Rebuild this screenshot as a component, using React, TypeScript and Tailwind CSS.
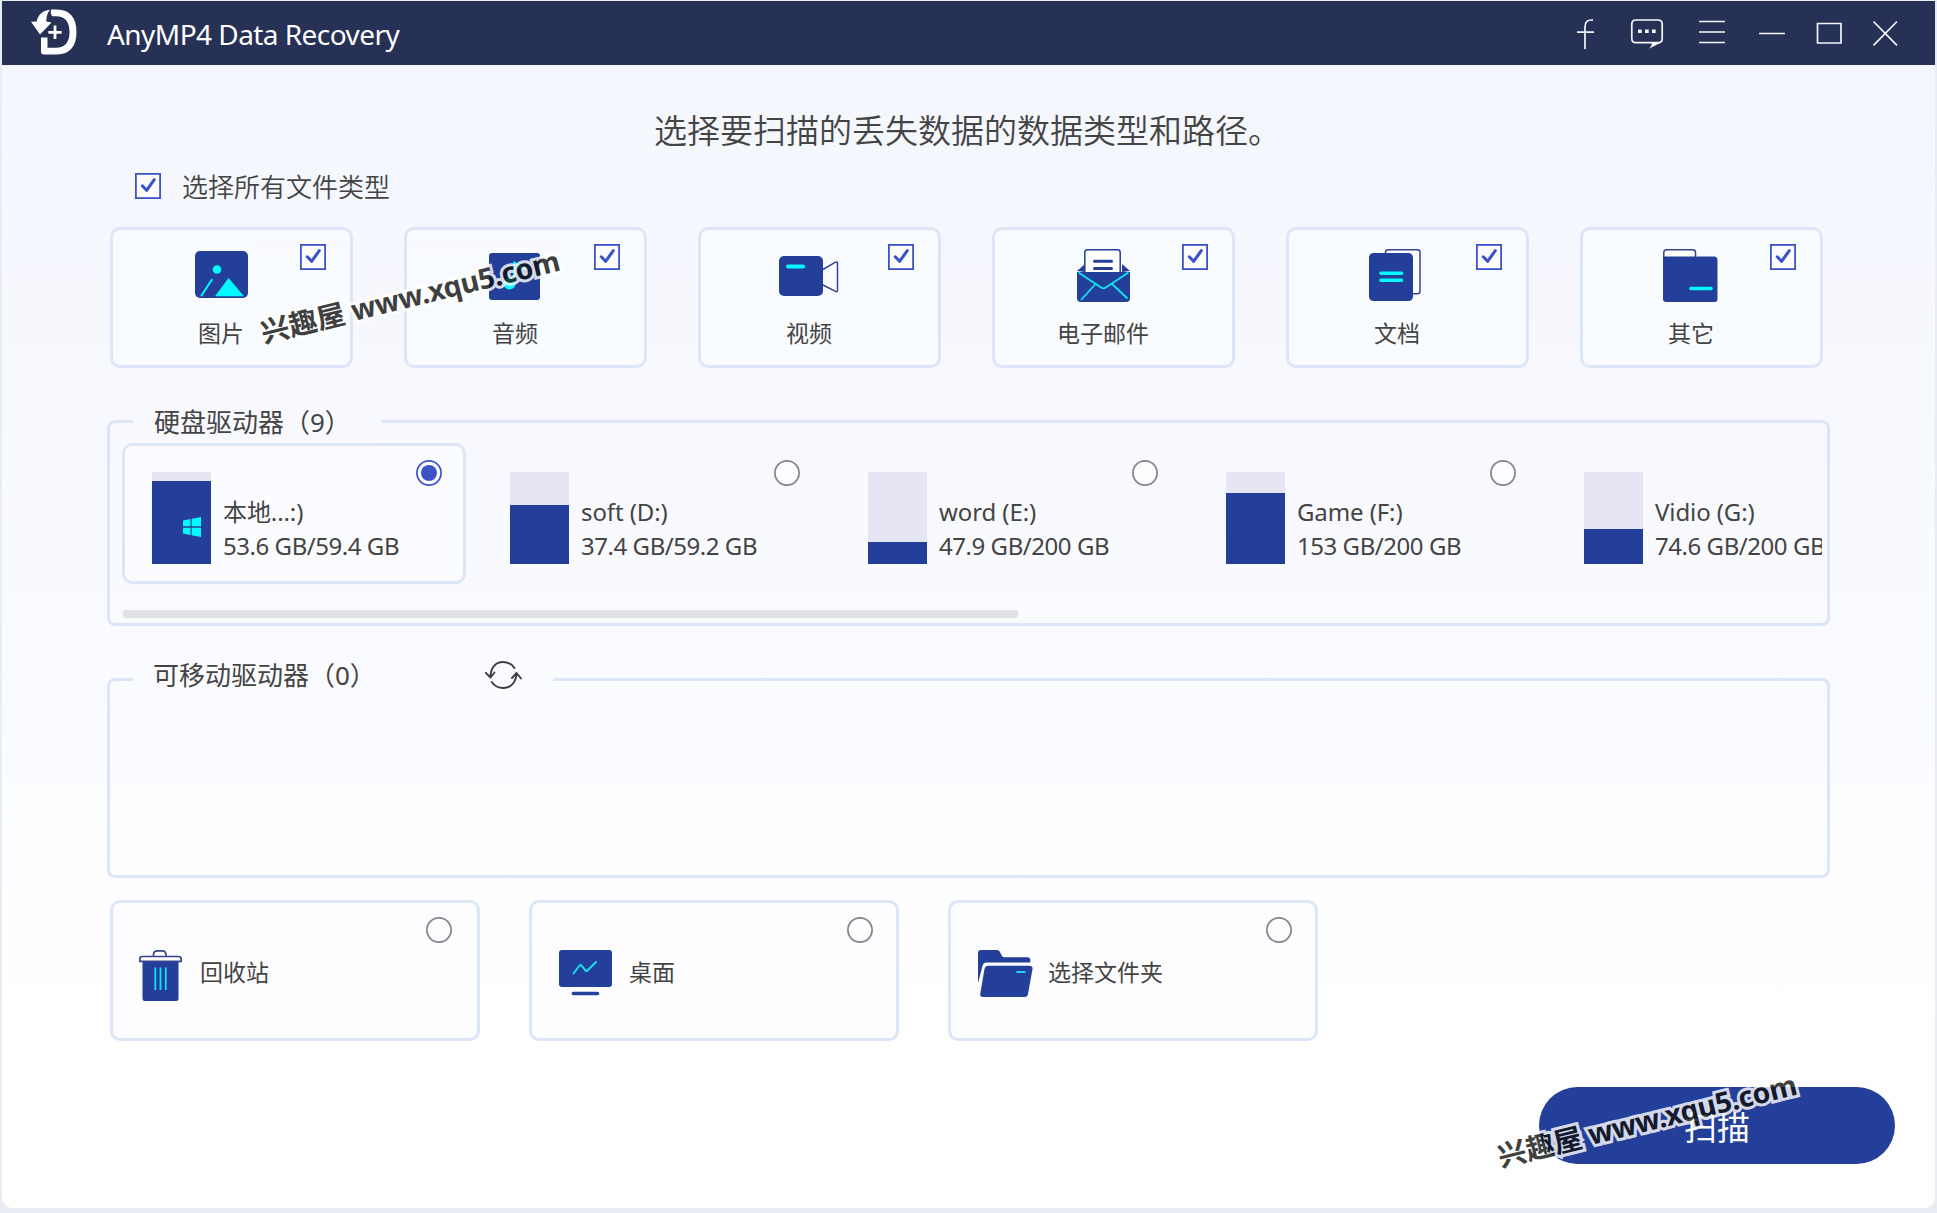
import React from 'react';

const NAVY = '#233f99';
const CYAN = '#00fbff';

function Check({ className = '' }: { className?: string }) {
  return (
    <svg viewBox="0 0 26 26" className={`h-[26px] w-[26px] shrink-0 ${className}`} fill="none" stroke="#3c53c7">
      <rect x="0.9" y="0.9" width="24.2" height="24.2" strokeWidth="1.8" fill="#fdfdff" />
      <path d="M7.3 12.800 11.6 17.300 19.300 6.700" strokeWidth="3.100" strokeLinecap="round" strokeLinejoin="round" />
    </svg>
  );
}

function Radio({ checked = false }: { checked?: boolean }) {
  return (
    <svg viewBox="0 0 26 26" className="h-[26px] w-[26px] shrink-0" fill="none">
      <circle cx="13" cy="13" r="12.1" stroke={checked ? '#3c53c7' : '#808389'} strokeWidth="1.700" fill="#fdfdff" />
      {checked && <circle cx="13" cy="13" r="8" fill="#3c53c7" />}
    </svg>
  );
}

function PictureIcon() {
  return (
    <svg viewBox="0 0 53 47" width="53" height="47">
      <rect width="53" height="47" rx="5" fill={NAVY} />
      <circle cx="22" cy="18.500" r="4.300" fill={CYAN} />
      <path d="M6.500 44.500 16.800 28.800" stroke={CYAN} strokeWidth="2" strokeLinecap="round" />
      <path d="M20 45.300 33.500 27 49 45.300Z" fill={CYAN} />
    </svg>
  );
}

function MusicIcon() {
  return (
    <svg viewBox="0 0 51 47" width="51" height="47">
      <rect width="51" height="47" rx="3" fill={NAVY} />
      <circle cx="20.500" cy="30.500" r="6" fill={CYAN} />
      <path d="M25.500 31V10c3 1 4 5 11 6" stroke={CYAN} strokeWidth="2.500" fill="none" />
    </svg>
  );
}

function VideoIcon() {
  return (
    <svg viewBox="0 0 60 40" width="60" height="40">
      <path d="M43 14 56.500 6.200Q58.500 5.400 58.500 7.500V34Q58.500 36.500 56.500 35.400L43 28.500" fill="#fafbff" stroke="#36458b" strokeWidth="1.500" />
      <rect width="44" height="40" rx="5" fill={NAVY} />
      <path d="M9 10.500h15" stroke={CYAN} strokeWidth="4" strokeLinecap="round" />
    </svg>
  );
}

function MailIcon() {
  return (
    <svg viewBox="0 0 53 53" width="53" height="53">
      <path d="M0 22 8 15V23ZM53 22 45 15V23Z" fill={NAVY} />
      <path d="M7.800 26V3.500Q7.800.8 10.500.8H40.500Q43.200.8 43.200 3.500V26" fill="#fff" stroke={NAVY} strokeWidth="1.500" />
      <path d="M17.500 12.300h17M17.500 19.500h17" stroke={NAVY} strokeWidth="3" strokeLinecap="round" />
      <path d="M0 23H53V49Q53 53 49 53H4Q0 53 0 49Z" fill={NAVY} />
      <path d="M1.500 23.500 24.500 38.700Q26.500 40 28.500 38.700L51.500 23.500M4 51 18.500 35M50.500 49.500 34.500 34.500" fill="none" stroke="#12e4f2" strokeWidth="1.800" />
    </svg>
  );
}

function DocumentIcon() {
  return (
    <svg viewBox="0 0 52 52" width="52" height="52">
      <rect x="16.500" y="0.800" width="34.500" height="44" rx="2.500" fill="#fdfdff" stroke="#36458b" strokeWidth="1.500" />
      <rect y="4" width="44" height="48" rx="4.500" fill={NAVY} />
      <path d="M12 24.300H32.500M12 31.300H32.500" stroke={CYAN} strokeWidth="3.600" strokeLinecap="round" />
    </svg>
  );
}

function OtherIcon() {
  return (
    <svg viewBox="0 0 55 53" width="55" height="53">
      <path d="M.8 12V3.500Q.8.800 3.500.8H29.500Q32.500.8 32.500 3.500V12" fill="#fff" stroke="#36458b" strokeWidth="1.500" />
      <path d="M0 7.500H51Q54.500 7.500 54.500 11V50Q54.500 53 51.500 53H3Q0 53 0 50Z" fill={NAVY} />
      <path d="M28 39.500H48" stroke={CYAN} strokeWidth="3.600" strokeLinecap="round" />
    </svg>
  );
}

function TrashIcon() {
  return (
    <svg viewBox="0 0 43 51" width="43" height="51">
      <path d="M14.500 7V5Q14.500.8 18.500.8H23Q27 .8 27 5V7" fill="#fff" stroke="#36458b" strokeWidth="1.700" />
      <path d="M3.500 10H39.500V48.500Q39.500 51 37 51H6Q3.500 51 3.500 48.500Z" fill={NAVY} />
      <path d="M.8 11.300V9Q.8 6.500 3.300 6.500H39.500Q42.200 6.500 42.200 9V11.300Z" fill="#fff" stroke="#36458b" strokeWidth="1.700" />
      <path d="M16.300 17.500V40M21.500 17.500V40M26.800 17.500V40" stroke="#0ee5f2" strokeWidth="1.800" />
    </svg>
  );
}

function DesktopIcon() {
  return (
    <svg viewBox="0 0 53 46" width="53" height="46">
      <rect width="53" height="37" rx="3" fill={NAVY} />
      <path d="M14.500 23.500 20.500 15.500Q21.500 14.500 22.500 15.500L26.500 20.500Q27.500 21.500 28.500 20.500L37 12" fill="none" stroke="#12e4f2" strokeWidth="1.900" strokeLinecap="round" />
      <path d="M14.300 43.500H38.500" stroke={NAVY} strokeWidth="3.500" strokeLinecap="round" />
    </svg>
  );
}

function FolderIcon() {
  return (
    <svg viewBox="0 0 55 47" width="55" height="47">
      <path d="M0 33V3Q0 0 3 0H19Q21.500 0 22.200 2.500L24 6Q24.800 7.300 26.500 7.300H49.500Q52.300 7.300 52.300 10V12.500H8Q5.500 12.500 4.700 15Z" fill={NAVY} />
      <path d="M10.500 15.700H51.500Q55 15.700 54.500 19L50 44Q49.500 47 46.500 47H4.500Q1.700 47 2.200 44L6.500 19Q7.200 15.700 10.500 15.700Z" fill={NAVY} />
      <path d="M38.500 22H47.500" stroke="#20dced" strokeWidth="1.900" />
    </svg>
  );
}

const types = [
  { label: '图片', icon: <PictureIcon />, pad: 'pt-[21px]' },
  { label: '音频', icon: <MusicIcon />, pad: 'pt-[23px] pr-[2px]' },
  { label: '视频', icon: <VideoIcon />, pad: 'pt-[26px]' },
  { label: '电子邮件', icon: <MailIcon />, pad: 'pt-[19px]' },
  { label: '文档', icon: <DocumentIcon />, pad: 'pt-[19px] pr-[4px]' },
  { label: '其它', icon: <OtherIcon />, pad: 'pt-[19px] pr-[2px]' },
];

const drives = [
  { name: '本地...:)', size: '53.6 GB/59.4 GB', fill: 83, selected: true },
  { name: 'soft (D:)', size: '37.4 GB/59.2 GB', fill: 59 },
  { name: 'word (E:)', size: '47.9 GB/200 GB', fill: 22 },
  { name: 'Game (F:)', size: '153 GB/200 GB', fill: 71 },
  { name: 'Vidio (G:)', size: '74.6 GB/200 GB', fill: 35 },
];

const places = [
  { label: '回收站', icon: <TrashIcon />, pad: 'pl-[26px]', gap: 'gap-[18px]', right: 'right-[25px]' },
  { label: '桌面', icon: <DesktopIcon />, pad: 'pl-[27px]', gap: 'gap-[17px]', right: 'right-[23px]' },
  { label: '选择文件夹', icon: <FolderIcon />, pad: 'pl-[27px]', gap: 'gap-[15px]', right: 'right-[23px]' },
];

function Logo() {
  return (
    <svg viewBox="0 0 46 46" width="46" height="46" fill="#fff">
      <path d="M20 .5H26C39 .5 45.500 9 45.500 23S39 45.500 26 45.500H13Q10 45.500 10 42.500V28.500H16.500V38.800H25C34 38.800 38.500 33.500 38.500 23S34 7.200 25 7.200H21Q19 4 20 .5Z" />
      <path d="M18.800.8C11.500 1.500 7 6 5.800 12.500L0 12.800 9 25.500 20.500 13.500 15.300 12.500C15.300 8 16.300 4.500 18.800.8Z" />
      <path d="M24 16.500V30M17.300 23.300H30.700" stroke="#fff" strokeWidth="2.800" />
    </svg>
  );
}

function TitleBar() {
  return (
    <header className="flex h-16 shrink-0 items-start bg-[#273156] text-white">
      <div className="ml-[29px] mt-[8px] w-[76px]"><Logo /></div>
      <h1 className="mt-[13px] text-[28px] leading-[40px] tracking-[-0.55px]">AnyMP4 Data Recovery</h1>
      <svg viewBox="1570 1 350 64" width="350" height="64" className="ml-auto mr-[15px]" fill="none" stroke="#f4f6fb" strokeWidth="1.700">
        <path d="M1593 20.200C1587.500 19.200 1585 22 1585 27V49M1577 32.200H1594" />
        <path d="M1636 20H1658Q1662.200 20 1662.200 24.200V38.500Q1662.200 42.700 1658 42.700H1636Q1631.800 42.700 1631.800 38.500V24.200Q1631.800 20 1636 20Z" />
        <path d="M1652 43H1660L1649 48.800Q1652 46 1652 43Z" fill="#fff" stroke="none" />
        <path d="M1638 31.300H1656" strokeWidth="3.500" strokeDasharray="3.700 3.300" />
        <path d="M1699 21.500H1725M1699 32H1725M1699 42.500H1725M1759 33.500H1785" />
        <path d="M1817.500 23.500H1841V43H1817.500Z" />
        <path d="M1873.500 21.500 1897 45.300M1897 21.500 1873.500 45.300" />
      </svg>
    </header>
  );
}

function WindowsMark() {
  return (
    <svg viewBox="0 0 18 20" width="18" height="20" fill={CYAN} className="mb-[27px] mr-[10px]">
      <path d="M0 3.500 7.500 2V9.200H0ZM8.700 1.800 18 0V9.200H8.700ZM0 10.700H7.500V18L0 16.500ZM8.700 10.700H18V20L8.700 18.200Z" />
    </svg>
  );
}

function Watermark({ className }: { className: string }) {
  return (
    <div className={`pointer-events-none absolute origin-bottom-left -rotate-[13.8deg] whitespace-nowrap text-[28.5px] leading-[40px] font-bold text-[#111] opacity-80 [-webkit-text-stroke:6px_white] [paint-order:stroke_fill] ${className}`}>
      兴趣屋 <span className="tracking-[-0.3px]">www.xqu5.com</span>
    </div>
  );
}

export default function App() {
  return (
    <div className="h-[1213px] w-[1937px] overflow-hidden bg-[#e9edf3] px-[2px] pt-px text-[#444] [font-family:'Noto_Sans','Noto_Sans_CJK_SC',sans-serif]">
      <div className="relative flex h-[1207px] flex-col overflow-hidden rounded-b-[10px] bg-linear-to-b from-[#f3f6fe] via-[#fafbff] via-55% to-white to-85%">
        <TitleBar />
        <main className="flex flex-1 flex-col pl-[105px]">
          <h2 className="ml-[547px] mt-[39px] text-[33px] leading-[50px] font-[350] font-['Noto_Sans_CJK_SC']">选择要扫描的丢失数据的数据类型和路径。</h2>
          <label className="ml-[28px] mt-[12px] flex h-[40px] items-center text-[26px] leading-[40px]">
            <Check />
            <span className="ml-[21px] mt-[2px] font-[350]">选择所有文件类型</span>
          </label>
          <section className="ml-[3px] mt-[21px] flex gap-[51px]">
            {types.map((t) => (
              <div key={t.label} className="relative h-[141px] w-[243px] rounded-[10px] border-[3px] border-[#dde6f8] bg-[#f8fbff]">
                <div className="flex h-full w-[216px] flex-col items-center">
                  <div className={`flex h-[83px] shrink-0 items-start ${t.pad}`}>{t.icon}</div>
                  <span className="text-[23px] leading-[40px]">{t.label}</span>
                </div>
                <Check className="absolute right-[24px] top-[14px]" />
              </div>
            ))}
          </section>
          <fieldset className="relative mt-[52px] h-[206px] w-[1723px] rounded-[8px] border-[3px] border-[#dde6f8] pl-[12px] pt-[20px] pr-[5px]">
            <div className="absolute -top-[21px] left-[23px] w-[248px] bg-[#f8f9ff] pl-[21px] text-[26px] leading-[40px]">硬盘驱动器（9）</div>
            <div className="flex w-[1700px] gap-[14px] overflow-hidden">
              {drives.map((d) => (
                <div key={d.name} className={`relative flex h-[141px] w-[344px] shrink-0 rounded-[10px] border-[3px] pl-[27px] pt-[26px] ${d.selected ? 'border-[#dde6f8] bg-[#fbfcff]' : 'border-transparent'}`}>
                  <div className="flex h-[92px] w-[59px] shrink-0 items-end bg-[#e6e5f3]">
                    <div className="flex w-full items-end justify-end bg-[#233f99]" style={{ height: d.fill }}>
                      {d.selected && <WindowsMark />}
                    </div>
                  </div>
                  <div className="ml-[12px] mt-[23px] whitespace-nowrap text-[24px] leading-[34px]">
                    <p className="tracking-[-0.1px]">{d.name}</p>
                    <p className="tracking-[-0.45px]">{d.size}</p>
                  </div>
                  <div className="absolute right-[21px] top-[14px]"><Radio checked={d.selected} /></div>
                </div>
              ))}
            </div>
            <div className="mt-[26px] ml-px h-[8px] w-[895px] rounded-[3px] bg-[#dfe1e4]" />
          </fieldset>
          <fieldset className="relative mt-[52px] h-[200px] w-[1723px] rounded-[8px] border-[3px] border-[#dde6f8]">
            <div className="absolute -top-[26px] left-[23px] flex w-[420px] items-center bg-[#fafbff] pl-[20px] text-[26px] leading-[40px]">
              可移动驱动器（0）
              <svg viewBox="0 0 37 28" width="37" height="28" className="absolute left-[352px] top-[6px]" fill="none" stroke="#3d3d3d" strokeWidth="1.900" strokeLinecap="round" strokeLinejoin="round">
                <path d="M5.500 15C6 6 11 1 18 1C23 1 27 3.500 29.500 7M.8 11.800 5.500 16.500 9.500 11.500" />
                <path d="M31.500 12.500C31 22 25 27 18.500 27C13 27 9 24.500 6.800 21M27 17 31.500 12 36 17.500" />
              </svg>
            </div>
          </fieldset>
          <section className="ml-[3px] mt-[22px] flex gap-[49px]">
            {places.map((p) => (
              <div key={p.label} className={`relative flex h-[141px] w-[370px] items-center rounded-[10px] border-[3px] border-[#dde6f8] bg-[#fdfdff] ${p.pad} ${p.gap}`}>
                <div className="mt-[47px] h-[51px] self-start">{p.icon}</div>
                <span className="mt-[3px] text-[23px] leading-[40px]">{p.label}</span>
                <div className={`absolute top-[14px] ${p.right}`}><Radio /></div>
              </div>
            ))}
          </section>
          <button className="ml-[1432px] mt-[46px] h-[77px] w-[356px] shrink-0 rounded-full bg-[#233f99] pt-[4px] text-[33px] leading-[50px] text-white">扫描</button>
        </main>
        <Watermark className="left-[264px] top-[311px]" />
        <Watermark className="left-[1501px] top-[1135px]" />
      </div>
    </div>
  );
}
